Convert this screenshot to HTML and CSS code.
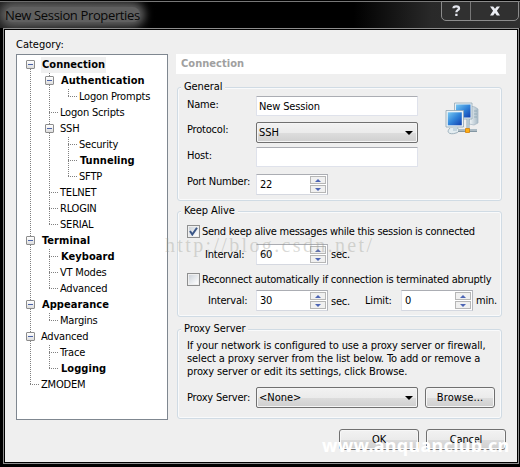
FILE: index.html
```html
<!DOCTYPE html>
<html lang="en">
<head>
<meta charset="utf-8">
<title>New Session Properties</title>
<link rel="stylesheet" href="styles.css">
</head>
<body>
<div class="window">
  <header class="titlebar">
    <h1 class="title">New Session Properties</h1>
    <div class="caption">
      <span class="cap help"><svg width="9" height="12" viewBox="0 0 9 12"><path d="M1.5 3.2C1.5 .8 7 .6 7 3.4 7 5.2 4.4 5.2 4.4 7.2M4.4 8.8V11" fill="none" stroke="#e4e6ee" stroke-width="2.3"/></svg></span>
      <span class="cap close"><svg width="12" height="10" viewBox="0 0 12 10"><path d="M1 .5h3.2L6 2.7 7.800 .5H11L7.900 4.800 11 9.500H7.800L6 7.100 4.200 9.500H1L4.100 4.800z" fill="#eceef4"/></svg></span>
    </div>
  </header>
  <main class="client">
    <section class="left">
      <div class="category">Category:</div>
      <div class="tree">
        <div class="row b"><i class="c d"><u></u></i><span class="sel">Connection</span></div>
        <div class="row b"><i class="c v"></i><i class="c v"><u></u></i><span>Authentication</span></div>
        <div class="row"><i class="c v"></i><i class="c v"></i><i class="c l"></i><span>Logon Prompts</span></div>
        <div class="row"><i class="c v"></i><i class="c v h"></i><span>Logon Scripts</span></div>
        <div class="row"><i class="c v"></i><i class="c v"><u></u></i><span>SSH</span></div>
        <div class="row"><i class="c v"></i><i class="c v"></i><i class="c v h"></i><span>Security</span></div>
        <div class="row b"><i class="c v"></i><i class="c v"></i><i class="c v h"></i><span>Tunneling</span></div>
        <div class="row"><i class="c v"></i><i class="c v"></i><i class="c l"></i><span>SFTP</span></div>
        <div class="row"><i class="c v"></i><i class="c v h"></i><span>TELNET</span></div>
        <div class="row"><i class="c v"></i><i class="c v h"></i><span>RLOGIN</span></div>
        <div class="row"><i class="c v"></i><i class="c l"></i><span>SERIAL</span></div>
        <div class="row b"><i class="c v"><u></u></i><span>Terminal</span></div>
        <div class="row b"><i class="c v"></i><i class="c v h"></i><span>Keyboard</span></div>
        <div class="row"><i class="c v"></i><i class="c v h"></i><span>VT Modes</span></div>
        <div class="row"><i class="c v"></i><i class="c l"></i><span>Advanced</span></div>
        <div class="row b"><i class="c v"><u></u></i><span>Appearance</span></div>
        <div class="row"><i class="c v"></i><i class="c l"></i><span>Margins</span></div>
        <div class="row"><i class="c v"><u></u></i><span>Advanced</span></div>
        <div class="row"><i class="c v"></i><i class="c v h"></i><span>Trace</span></div>
        <div class="row b"><i class="c v"></i><i class="c l"></i><span>Logging</span></div>
        <div class="row"><i class="c l"></i><span>ZMODEM</span></div>
      </div>
    </section>
    <section class="right">
      <h2 class="heading">Connection</h2>
      <div class="group general">
        <div class="legend">General</div>
        <div class="gbody">
          <div class="fields">
            <div class="field"><label class="up">Name:</label><div class="input">New Session</div></div>
            <div class="field"><label class="up0">Protocol:</label><div class="select">SSH</div></div>
            <div class="field"><label class="up">Host:</label><div class="input"></div></div>
            <div class="field"><label class="up0">Port Number:</label><div class="spin"><span>22</span><b class="arrows"><i></i><i class="down"></i></b></div></div>
          </div>
          <svg class="net" width="34" height="34" viewBox="0 0 34 34">
            <defs><linearGradient id="s" x1="0" y1="0" x2="1" y2="1"><stop offset="0" stop-color="#79c8f2"/><stop offset=".5" stop-color="#3184da"/><stop offset="1" stop-color="#123fae"/></linearGradient>
            <linearGradient id="t"><stop offset="0" stop-color="#f4f8fa"/><stop offset="1" stop-color="#a8bac6"/></linearGradient></defs>
            <path d="M25 4l5 1 3 2v14l-4 2-5-1z" fill="url(#t)" stroke="#a3b5c1" stroke-width=".7"/>
            <path d="M29 9h3M29 12h3M29 15h3" stroke="#8ca4b3" stroke-width=".8"/>
            <path d="M9.500 1h17.500v16H9.500z" fill="#e9f0f4" stroke="#93a8b6" stroke-width=".8"/>
            <path d="M11 2.500h14.500v13H11z" fill="url(#s)"/>
            <path d="M23 17v10" stroke="#8fa7b6" stroke-width="3"/><path d="M23 17v10" stroke="#dbe7ed"/>
            <path d="M5 26c-5 5 1 7 6 5 4-1 4-4 1-5" fill="#e4edf1" stroke="#8ba2b0" stroke-width=".8"/>
            <path d="M13 28.500h19" stroke="#8497a3" stroke-width="3"/><path d="M13 28h19" stroke="#d5e0e6"/>
            <path d="M1 8.500h17.500v16.500H1z" fill="#edf3f6" stroke="#91a5b2" stroke-width=".8"/>
            <path d="M2.800 10.300h14v13H2.800z" fill="url(#s)"/>
            <path d="M8 25h4v4H8z" fill="#c6d6df"/>
            <path d="M20.500 26.500h4v4h-4z" fill="#ffae13" stroke="#d68105" stroke-width=".8"/>
          </svg>
        </div>
      </div>
      <div class="group keep">
        <div class="legend">Keep Alive</div>
        <div class="check"><span class="box"><svg width="9" height="9" viewBox="0 0 9 9"><path d="M1 4l2.300 3.500L8 .7" fill="none" stroke="#3b5687" stroke-width="2"/></svg></span><span class="send">Send keep alive messages while this session is connected</span></div>
        <div class="line first"><label>Interval:</label><div class="spin"><span>60</span><b class="arrows"><i></i><i class="down"></i></b></div><span class="unit">sec.</span></div>
        <div class="check"><span class="box"></span><span class="reconnect">Reconnect automatically if connection is terminated abruptly</span></div>
        <div class="line second"><label>Interval:</label><div class="spin"><span>30</span><b class="arrows"><i></i><i class="down"></i></b></div><span class="unit sec2">sec.</span><span class="limit">Limit:</span><div class="spin"><span>0</span><b class="arrows"><i></i><i class="down"></i></b></div><span class="unit">min.</span></div>
      </div>
      <div class="group proxy">
        <div class="legend">Proxy Server</div>
        <p class="note">If your network is configured to use a proxy server or firewall,<br>select a proxy server from the list below. To add or remove a<br>proxy server or edit its settings, click Browse.</p>
        <div class="proxyrow"><label>Proxy Server:</label><div class="select">&lt;None&gt;</div><button class="btn browse">Browse...</button></div>
      </div>
      <footer class="actions"><button class="btn">OK</button><button class="btn">Cancel</button></footer>
    </section>
  </main>
  <div class="mark blog">http://blog.csdn.net/</div>
  <div class="mark site">www.anquanclub.cn</div>
</div>
</body>
</html>
```
FILE: styles.css
```css
* { box-sizing: border-box; }
body { margin: 0; font: 11px/14px "DejaVu Sans Condensed", "DejaVu Sans", sans-serif; font-stretch: condensed; color: #000; letter-spacing: -0.2px; }
i, u { font-style: normal; text-decoration: none; }
.window { position: relative; width: 520px; height: 467px; overflow: hidden; background: #000; display: flex; flex-direction: column; padding: 0 1px 3px 4px; }
.titlebar { height: 28px; margin: 0 -1px 0 -4px; display: flex; justify-content: space-between; border-top: 1px solid #000; box-shadow: inset 0 1px #777; background: linear-gradient(90deg, #222, #000 30%, #000 68%, #292929 83%, #303030); overflow: hidden; }
.title { margin: 6px 0 6px 5px; height: 15px; font: 13px/16px "Open Sans", sans-serif; color: #080808; letter-spacing: -0.36px; white-space: nowrap; background: #606060; border-radius: 8px; box-shadow: 0 0 9px 5px #606060; }
.caption { display: flex; width: 78px; height: 20px; margin-right: 1px; border: 1px solid #8b8b8b; border-radius: 0 0 5px 5px; background: #303030; }
.cap { display: flex; align-items: center; justify-content: center; border-right: 1px solid #777; width: 29px; }
.close { flex: 1; border: 0; }
.client { flex: 1; display: flex; margin-right: 1px; background: #efefef; border: 1px solid #000; outline: 1px solid #8d8d8d; height: 434px; max-height: 434px; margin-top: 1px; }
.left { width: 152px; margin-left: 11px; padding-top: 8px; }
.category { height: 16px; letter-spacing: 0; }
.tree { height: 366px; border: 1px solid #7f8790; background: #fff; padding: 2px 0 0 4px; }
.row { display: flex; height: 16px; line-height: 15px; white-space: nowrap; }
.row span { padding: 0 1px; }
.row.b span { margin-left: 1px; }
.row .sel { background: #f0f0f0; }
.b { font-weight: bold; letter-spacing: 0.05px; }
.c { width: 19px; height: 16px; display: block; flex: none; background-repeat: no-repeat; --v: repeating-linear-gradient(#808080 0 1px, transparent 1px 2px); --h: repeating-linear-gradient(90deg, #808080 0 1px, transparent 1px 2px); }
.v { background-image: var(--v); background-size: 1px 16px; background-position: 9px 0; }
.d { background-image: var(--v); background-size: 1px 8px; background-position: 9px 8px; }
.h { background-image: var(--v), var(--h); background-size: 1px 16px, 9px 1px; background-position: 9px 0, 9px 7px; }
.l { background-image: var(--v), var(--h); background-size: 1px 8px, 9px 1px; background-position: 9px 0, 9px 7px; }
.c u { display: block; width: 9px; height: 9px; margin: 3px 0 0 5px; border: 1px solid #8c8c8c; border-radius: 1px; background: linear-gradient(#4b63a7, #4b63a7) center / 5px 1px no-repeat, linear-gradient(#fff, #ddd); }
.right { width: 330px; margin-left: 8px; padding-top: 24px; }
.heading { height: 20px; margin: 0; padding-left: 5px; background: #fff; color: #a0a0a0; font-size: 11px; line-height: 20px; letter-spacing: 0.05px; }
.group { margin-left: 1px; width: 325px; border: 1px solid #d0dbe4; border-radius: 3px; box-shadow: inset 0 0 0 1px #f9fafb; padding-left: 9px; white-space: nowrap; }
.legend { width: max-content; height: 14px; margin: -8px 0 0 -6px; padding: 0 3px; background: #efefef; letter-spacing: -0.1px; }
.general { margin-top: 13px; height: 114px; }
.gbody { display: flex; }
.fields { display: grid; grid-template-rows: 26px 25px 27px 20px; margin-top: 2px; }
.field { display: flex; }
.field label { width: 69px; }
.up { padding-top: 2px; }
.up0 { padding-top: 1px; }
.input { width: 162px; height: 20px; border: 1px solid #dfe2eb; border-top-color: #abadb3; background: #fff; padding: 3px 2px; border-radius: 1px; letter-spacing: -0.15px; }
.select { width: 162px; height: 21px; border: 1px solid #707070; border-radius: 2px; padding: 3px 3px 2px 2px; background: linear-gradient(#f2f2f2, #ebebeb 50%, #dddddd 51%, #cfcfcf); display: flex; justify-content: space-between; align-items: center; box-shadow: inset 0 0 0 1px #f5f5f5; letter-spacing: 0; }
.select::after { content: ""; border: 4px solid transparent; border-top-color: #000; border-bottom: 0; margin-right: 1px; }
.spin { width: 72px; height: 21px; border: 1px solid #abadb3; border-color: #abadb3 #b4b6bc #d5d8e0 #dfe2eb; background: #fff; display: flex; justify-content: space-between; padding: 1px 1px 1px 3px; line-height: 18px; }
.arrows { width: 16px; display: grid; gap: 1px; grid-template-rows: 8px 8px; }
.arrows i { border: 1px solid #b6b6b6; background: #f0f0f0; display: flex; align-items: center; justify-content: center; }
.arrows i::before { content: ""; border: 3px solid transparent; border-top: 0; border-bottom-color: #4d65b4; }
.arrows .down::before { transform: rotate(180deg); }
.net { margin: 8px 0 0 27px; }
.keep { margin-top: 10px; height: 106px; }
.check { display: flex; height: 13px; margin-top: 7px; line-height: 13px; }
.box { width: 13px; height: 13px; border: 1px solid #8e8f8f; background: linear-gradient(135deg, #cdd3da, #fff) content-box #f4f4f4; padding: 1px; display: flex; margin-right: 2px; }
.send { letter-spacing: -0.26px; }
.reconnect { letter-spacing: -0.23px; }
.line { display: flex; align-items: center; height: 21px; margin-top: 6px; }
.first { margin-bottom: 8px; }
.line label { width: 51px; margin-left: 18px; }
.unit { margin-left: 3px; }
.sec2 { padding-top: 2px; }
.second { margin-top: 4px; }
.second label { width: 48px; margin-left: 21px; }
.limit { margin-left: 15px; width: 36px; }
.proxy { margin-top: 12px; height: 90px; }
.note { margin: 3px 0 0; line-height: 13px; letter-spacing: -0.11px; }
.proxyrow { display: flex; margin-top: 9px; align-items: center; }
.proxyrow label { width: 69px; }
.btn { font: inherit; letter-spacing: inherit; color: #000; height: 21px; width: 80px; padding: 0; border: 1px solid #707070; border-radius: 3px; background: linear-gradient(#f2f2f2, #ebebeb 50%, #ddd 51%, #cfcfcf); box-shadow: inset 0 0 0 1px #f7f7f7; }
.browse { width: 70px; margin-left: 7px; letter-spacing: 0.1px; }
.actions { display: flex; gap: 7px; margin: 10px 0 0 163px; }
.mark { position: absolute; white-space: nowrap; }
.blog { left: 165px; top: 232px; font: 20px/26px "Liberation Serif", serif; letter-spacing: 2.35px; color: rgba(150,150,140,.35); }
.site { left: 322px; top: 434px; font: bold 18px/22px "Noto Sans", sans-serif; letter-spacing: 0.3px; color: #fff; }
```
